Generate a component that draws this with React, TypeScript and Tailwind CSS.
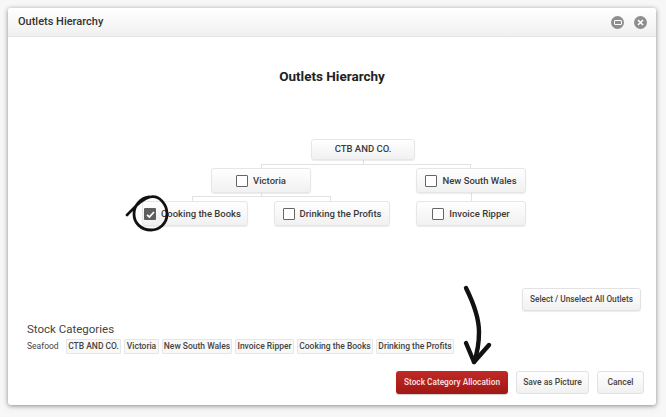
import React from 'react';

const nodeClass =
  'absolute flex items-center justify-center gap-[5px] whitespace-nowrap rounded-[3px] border border-[#e6e6e6] bg-gradient-to-b from-white to-[#f1f1f1] text-[9.5px] font-medium text-[#3a3a3a] shadow-[0_1px_1px_rgba(0,0,0,0.08)]';

const nodes = [
  { label: 'Victoria', cls: 'left-[203px] top-[131px] w-[100px] h-[25px] pt-[1px]' },
  { label: 'New South Wales', cls: 'left-[408px] top-[131px] w-[110px] h-[25px] pt-[1px]' },
  { label: 'Cooking the Books', cls: 'left-[134px] top-[164px] w-[106px] h-[25px] pt-[1px] pr-[5px] gap-[3px]', checked: true },
  { label: 'Drinking the Profits', cls: 'left-[266px] top-[164px] w-[116px] h-[25px] pt-[1px]' },
  { label: 'Invoice Ripper', cls: 'left-[408px] top-[164px] w-[110px] h-[25px] pt-[1px]' },
];

const lines = [
  'left-[355px] top-[122px] w-px h-[5px]',
  'left-[253px] top-[127px] w-[210px] h-px',
  'left-[253px] top-[127px] w-px h-[4px]',
  'left-[462px] top-[127px] w-px h-[4px]',
  'left-[253px] top-[156px] w-px h-[4px]',
  'left-[184px] top-[159px] w-[139px] h-px',
  'left-[184px] top-[159px] w-px h-[5px]',
  'left-[322px] top-[159px] w-px h-[5px]',
  'left-[463px] top-[156px] w-px h-[8px]',
];

const tags = [
  { label: 'CTB AND CO.', cls: 'w-[55px]' },
  { label: 'Victoria', cls: 'w-[35px]' },
  { label: 'New South Wales', cls: 'w-[70px]' },
  { label: 'Invoice Ripper', cls: 'w-[59px]' },
  { label: 'Cooking the Books', cls: 'w-[76px]' },
  { label: 'Drinking the Profits', cls: 'w-[78px]' },
];

function Box({ checked }: { checked?: boolean }) {
  if (checked) {
    return (
      <span className="flex h-[12px] w-[12px] shrink-0 items-center justify-center rounded-[1px] bg-[#5f5f5f]">
        <svg width="11" height="11" viewBox="0 0 11 11" fill="none">
          <path d="M2 5.8 L4.4 8 L9 3" stroke="#fff" strokeWidth="1.7" />
        </svg>
      </span>
    );
  }
  return <span className="h-[12px] w-[12px] shrink-0 rounded-[1px] border border-[#666] bg-white" />;
}

export default function App() {
  return (
    <div className="h-[417px] w-[666px] overflow-hidden bg-[#f7f7f7] pl-2 pt-2 font-['Roboto',sans-serif]">
      {/* dialog */}
      <div className="flex h-[397px] w-[648px] flex-col rounded-[3px] bg-white shadow-[0_1px_5px_rgba(0,0,0,0.45)]">
        <div className="flex h-[29px] shrink-0 items-center justify-between rounded-t-[3px] border-b border-[#e4e4e4] bg-gradient-to-b from-white to-[#f0f0f0] pl-[10px] pr-[9px]">
          <span className="pt-[1px] text-[11px] font-medium text-[#333]">Outlets Hierarchy</span>
          <div className="flex items-center gap-[10px]">
            <span className="flex h-[13px] w-[13px] items-center justify-center rounded-full bg-[#8e8e8e]">
              <span className="h-[5px] w-[8px] rounded-[1px] border-[1.5px] border-white" />
            </span>
            <span className="flex h-[13px] w-[13px] items-center justify-center rounded-full bg-[#8e8e8e]">
              <svg width="7" height="7" viewBox="0 0 7 7">
                <path d="M1 1 L6 6 M6 1 L1 6" stroke="#fff" strokeWidth="1.6" />
              </svg>
            </span>
          </div>
        </div>

        <div className="relative flex flex-1 flex-col">
          <h1 className="mt-[30px] text-center text-[13.5px] leading-[18px] font-bold text-[#222]">Outlets Hierarchy</h1>

          {/* org chart */}
          <div className="absolute left-0 top-0 h-[200px] w-full">
            {lines.map((cls) => (
              <div key={cls} className={`absolute bg-[#e2e2e2] ${cls}`} />
            ))}
            <div className={`${nodeClass} left-[303px] top-[102px] h-[21px] w-[104px]`}>CTB AND CO.</div>
            {nodes.map((n) => (
              <div key={n.label} className={`${nodeClass} ${n.cls}`}>
                <Box checked={n.checked} />
                <span>{n.label}</span>
              </div>
            ))}
          </div>

          <div className="mt-auto flex justify-end pr-[15px]">
            <button className="h-[23px] w-[119px] whitespace-nowrap rounded-[3px] border border-[#e2e2e2] bg-gradient-to-b from-white to-[#f1f1f1] text-[8.25px] font-medium text-[#444] shadow-[0_1px_1px_rgba(0,0,0,0.08)]">
              Select / Unselect All Outlets
            </button>
          </div>

          <div className="mt-[11px] pl-[19px]">
            <div className="text-[11.5px] leading-[15px] text-[#444]">Stock Categories</div>
            <div className="mt-[2px] flex h-[15px] items-center">
              <span className="w-[39px] text-[8.5px] text-[#444]">Seafood</span>
              <div className="flex gap-[3px]">
                {tags.map((t) => (
                  <span
                    key={t.label}
                    className={`flex h-[15px] items-center justify-center whitespace-nowrap rounded-[1px] border border-[#e6e6e6] bg-[#f8f8f8] text-[8.5px] font-medium text-[#444] ${t.cls}`}
                  >
                    {t.label}
                  </span>
                ))}
              </div>
            </div>
          </div>

          <div className="mt-[17px] mb-[11px] flex justify-end gap-2 pr-3">
            <button className="h-[23px] w-[112px] whitespace-nowrap rounded-[3px] bg-gradient-to-b from-[#c22a26] to-[#a01714] text-[8.25px] font-semibold text-[#f6dede] shadow-[0_1px_1px_rgba(0,0,0,0.2)]">
              Stock Category Allocation
            </button>
            <button className="h-[23px] w-[73px] whitespace-nowrap rounded-[3px] border border-[#e2e2e2] bg-gradient-to-b from-white to-[#f1f1f1] text-[8.5px] font-medium text-[#444]">
              Save as Picture
            </button>
            <button className="h-[23px] w-[47px] rounded-[3px] border border-[#e2e2e2] bg-gradient-to-b from-white to-[#f1f1f1] text-[8.5px] font-medium text-[#444]">
              Cancel
            </button>
          </div>
        </div>
      </div>

      {/* hand drawn annotations over the screenshot */}
      <svg className="pointer-events-none absolute left-0 top-0" width="666" height="417" viewBox="0 0 666 417" fill="none">
        <path
          d="M127 215 C133 209 141 199 150 197 C160 195 167 205 167 214 C167 224 159 230 151 230 C141 230 134 223 134 214 C134 206 140 198 149 197"
          stroke="#111"
          strokeWidth="2.8"
          strokeLinecap="round"
        />
        <path d="M466 288 C472 300 479 318 479 332 C479 343 477 354 474 362" stroke="#111" strokeWidth="4.4" strokeLinecap="round" />
        <path d="M466 343 L474 362 L489 345" stroke="#111" strokeWidth="4.4" strokeLinecap="round" strokeLinejoin="round" />
      </svg>
    </div>
  );
}
